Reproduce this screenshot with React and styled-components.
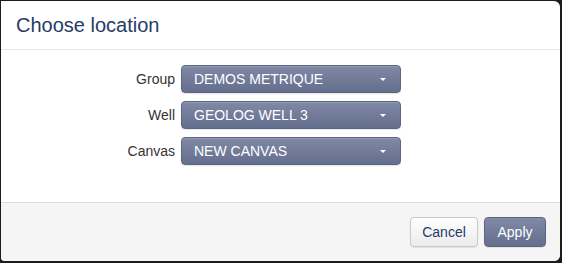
import React from 'react'
import styled, { createGlobalStyle } from 'styled-components'

const GlobalStyle = createGlobalStyle`
  html, body {
    margin: 0;
    padding: 0;
    background: #1b1c1e;
  }
  body {
    font-family: "Liberation Sans", Arial, sans-serif;
  }
`

const Modal = styled.div`
  box-sizing: border-box;
  width: 559px;
  height: 260px;
  margin: 1px 0 0 1px;
  background: #fff;
  border-radius: 0 6px 6px 4px;
  overflow: hidden;
  display: flex;
  flex-direction: column;
`

const Header = styled.div`
  height: 48px;
  padding: 0 15px;
  display: flex;
  align-items: center;
  border-bottom: 1px solid #e8e8e8;
`

const Title = styled.h3`
  margin: 0;
  font-size: 20px;
  font-weight: normal;
  color: #263b66;
`

const Body = styled.div`
  flex: 1;
  padding-top: 15px;
  display: flex;
  flex-direction: column;
  gap: 8px;
`

const Row = styled.div`
  display: grid;
  grid-template-columns: 174px 220px;
  column-gap: 6px;
  align-items: center;
`

const Label = styled.label`
  text-align: right;
  font-size: 14px;
  color: #333;
`

const Select = styled.button`
  box-sizing: border-box;
  height: 28px;
  padding: 0 14px 0 12px;
  display: flex;
  align-items: center;
  justify-content: space-between;
  border: 1px solid #5b6582;
  border-radius: 4px;
  background: linear-gradient(#808aa7, #646e8d);
  box-shadow: inset 0 1px 0 rgba(255, 255, 255, 0.15), 0 1px 1px rgba(0, 0, 0, 0.1);
  color: #fff;
  font-family: inherit;
  font-size: 14px;
  text-align: left;
`

const Caret = styled.span`
  width: 0;
  height: 0;
  border-left: 3px solid transparent;
  border-right: 3px solid transparent;
  border-top: 3px solid #fff;
`

const Footer = styled.div`
  height: 58px;
  padding: 0 14px 0 0;
  display: flex;
  align-items: center;
  justify-content: flex-end;
  gap: 6px;
  background: #f5f5f5;
  border-top: 1px solid #dcdcdc;
`

const Button = styled.button`
  box-sizing: border-box;
  height: 30px;
  width: ${p => p.$w}px;
  padding: 0;
  border-radius: 4px;
  font-family: inherit;
  font-size: 14px;
  border: 1px solid ${p => (p.$primary ? '#5b6582' : '#c8c8c8')};
  color: ${p => (p.$primary ? '#fff' : '#263b66')};
  background: ${p =>
    p.$primary ? 'linear-gradient(#808aa7, #646e8d)' : 'linear-gradient(#ffffff, #ebebeb)'};
  box-shadow: 0 1px 1px rgba(0, 0, 0, 0.08);
`

const fields = [
  { label: 'Group', value: 'DEMOS METRIQUE' },
  { label: 'Well', value: 'GEOLOG WELL 3' },
  { label: 'Canvas', value: 'NEW CANVAS' },
]

const App = () => {
  return (
    <>
      <GlobalStyle />
      <Modal>
        <Header>
          <Title>Choose location</Title>
        </Header>
        <Body>
          {fields.map(f => (
            <Row key={f.label}>
              <Label>{f.label}</Label>
              <Select>
                {f.value}
                <Caret />
              </Select>
            </Row>
          ))}
        </Body>
        <Footer>
          <Button $w={68}>Cancel</Button>
          <Button $primary $w={62}>Apply</Button>
        </Footer>
      </Modal>
    </>
  )
}

export default App
